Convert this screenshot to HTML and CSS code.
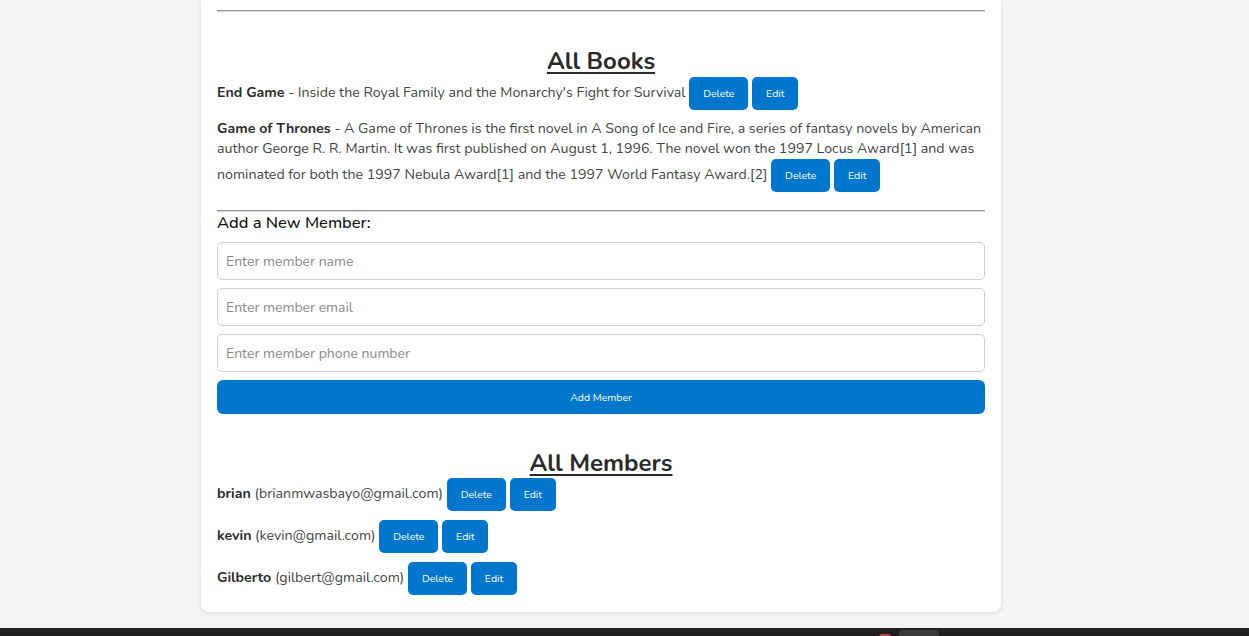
FILE: index.html
```html
<!DOCTYPE html>
<html lang="en">
<head>
<meta charset="utf-8">
<title>Library</title>
<link rel="stylesheet" href="styles.css">
</head>
<body>
<div class="page">
  <main class="card">
    <hr class="rule">
    <section class="books">
      <h2 class="title">All Books</h2>
      <p class="item"><strong>End Game</strong> - Inside the Royal Family and the Monarchy's Fight for Survival <button class="btn">Delete</button> <button class="btn">Edit</button></p>
      <p class="item"><strong>Game of Thrones</strong> - A Game of Thrones is the first novel in A Song of Ice and Fire, a series of fantasy novels by American author George R. R. Martin. It was first published on August 1, 1996. The novel won the 1997 Locus Award[1] and was nominated for both the 1997 Nebula Award[1] and the 1997 World Fantasy Award.[2] <button class="btn">Delete</button> <button class="btn">Edit</button></p>
    </section>
    <hr class="rule rule2">
    <form class="form">
      <h3 class="form-title">Add a New Member:</h3>
      <input class="field" type="text" placeholder="Enter member name">
      <input class="field" type="email" placeholder="Enter member email">
      <input class="field" type="text" placeholder="Enter member phone number">
      <button class="btn btn-wide" type="button">Add Member</button>
    </form>
    <section class="members">
      <h2 class="title">All Members</h2>
      <p class="item"><strong>brian</strong> (brianmwasbayo@gmail.com) <button class="btn">Delete</button> <button class="btn">Edit</button></p>
      <p class="item"><strong>kevin</strong> (kevin@gmail.com) <button class="btn">Delete</button> <button class="btn">Edit</button></p>
      <p class="item"><strong>Gilberto</strong> (gilbert@gmail.com) <button class="btn">Delete</button> <button class="btn">Edit</button></p>
    </section>
  </main>
</div>
<div class="taskbar">
  <span class="tb-icon tb-red"></span>
  <span class="tb-tab"></span>
</div>
</body>
</html>
```
FILE: styles.css
```css
* { box-sizing: border-box; }
html, body { margin: 0; padding: 0; }
body {
  background: #f3f4f6;
  font-family: "Nunito", "Lato", "Open Sans", sans-serif;
  color: #333;
  height: 636px;
  overflow: hidden;
  display: flex;
  flex-direction: column;
}
.page {
  flex: 1;
  display: flex;
  justify-content: flex-start;
  padding-left: 201px;
}
.card {
  width: 800px;
  height: 612px;
  background: #fff;
  border-radius: 0 0 8px 8px;
  box-shadow: 0 1px 4px rgba(0,0,0,0.12);
  padding: 10px 16px 0;
}
.rule {
  margin: 0;
  border: 0;
  border-top: 1px solid #9a9a9a;
  border-bottom: 1px solid #d6d6d6;
}
.books { padding-top: 34px; }
.books .title { margin-bottom: 1px; }
.books .item { margin-bottom: 9px; }
.title {
  margin: 0;
  text-align: center;
  font-size: 24px;
  font-weight: 700;
  text-decoration: underline;
  text-decoration-thickness: 2px;
  text-underline-offset: 3px;
  line-height: 30px;
  color: #2a2a2a;
}
.item {
  margin: 0 0 8px;
  font-size: 14.2px;
  line-height: 20px;
  color: #444;
}
.item strong { color: #2b2b2b; font-weight: 700; }
.btn {
  font-family: inherit;
  background: #0077cc;
  color: #fff;
  border: 0;
  border-radius: 5px;
  font-size: 10.5px;
  padding: 0 14px;
  height: 33px;
  margin: 0;
  vertical-align: middle;
  cursor: pointer;
}
.rule2 { margin-top: 18px; }
.form {
  display: flex;
  flex-direction: column;
  gap: 8px;
  padding-top: 0;
}
.form-title {
  margin: 0;
  font-size: 16.5px;
  font-weight: 500;
  color: #111;
  line-height: 22px;
}
.field {
  height: 38px;
  border: 1px solid #cfcfcf;
  border-radius: 5px;
  padding: 0 8px;
  font-family: inherit;
  font-size: 14px;
  color: #333;
}
.field::placeholder { color: #8a8a8a; }
.btn-wide {
  width: 100%;
  border-radius: 6px;
  height: 34px;
}
.members { padding-top: 34px; }
.members .item { margin-bottom: 9px; }
.taskbar {
  height: 8px;
  background: #211f1d;
  position: relative;
}
.tb-icon {
  position: absolute;
  left: 879px;
  top: 6px;
  width: 12px;
  height: 3px;
  border-radius: 6px 6px 0 0;
  background: #c04848;
}
.tb-tab {
  position: absolute;
  left: 899px;
  top: 2px;
  width: 40px;
  height: 6px;
  border-radius: 3px 3px 0 0;
  background: #3a3836;
}
```
